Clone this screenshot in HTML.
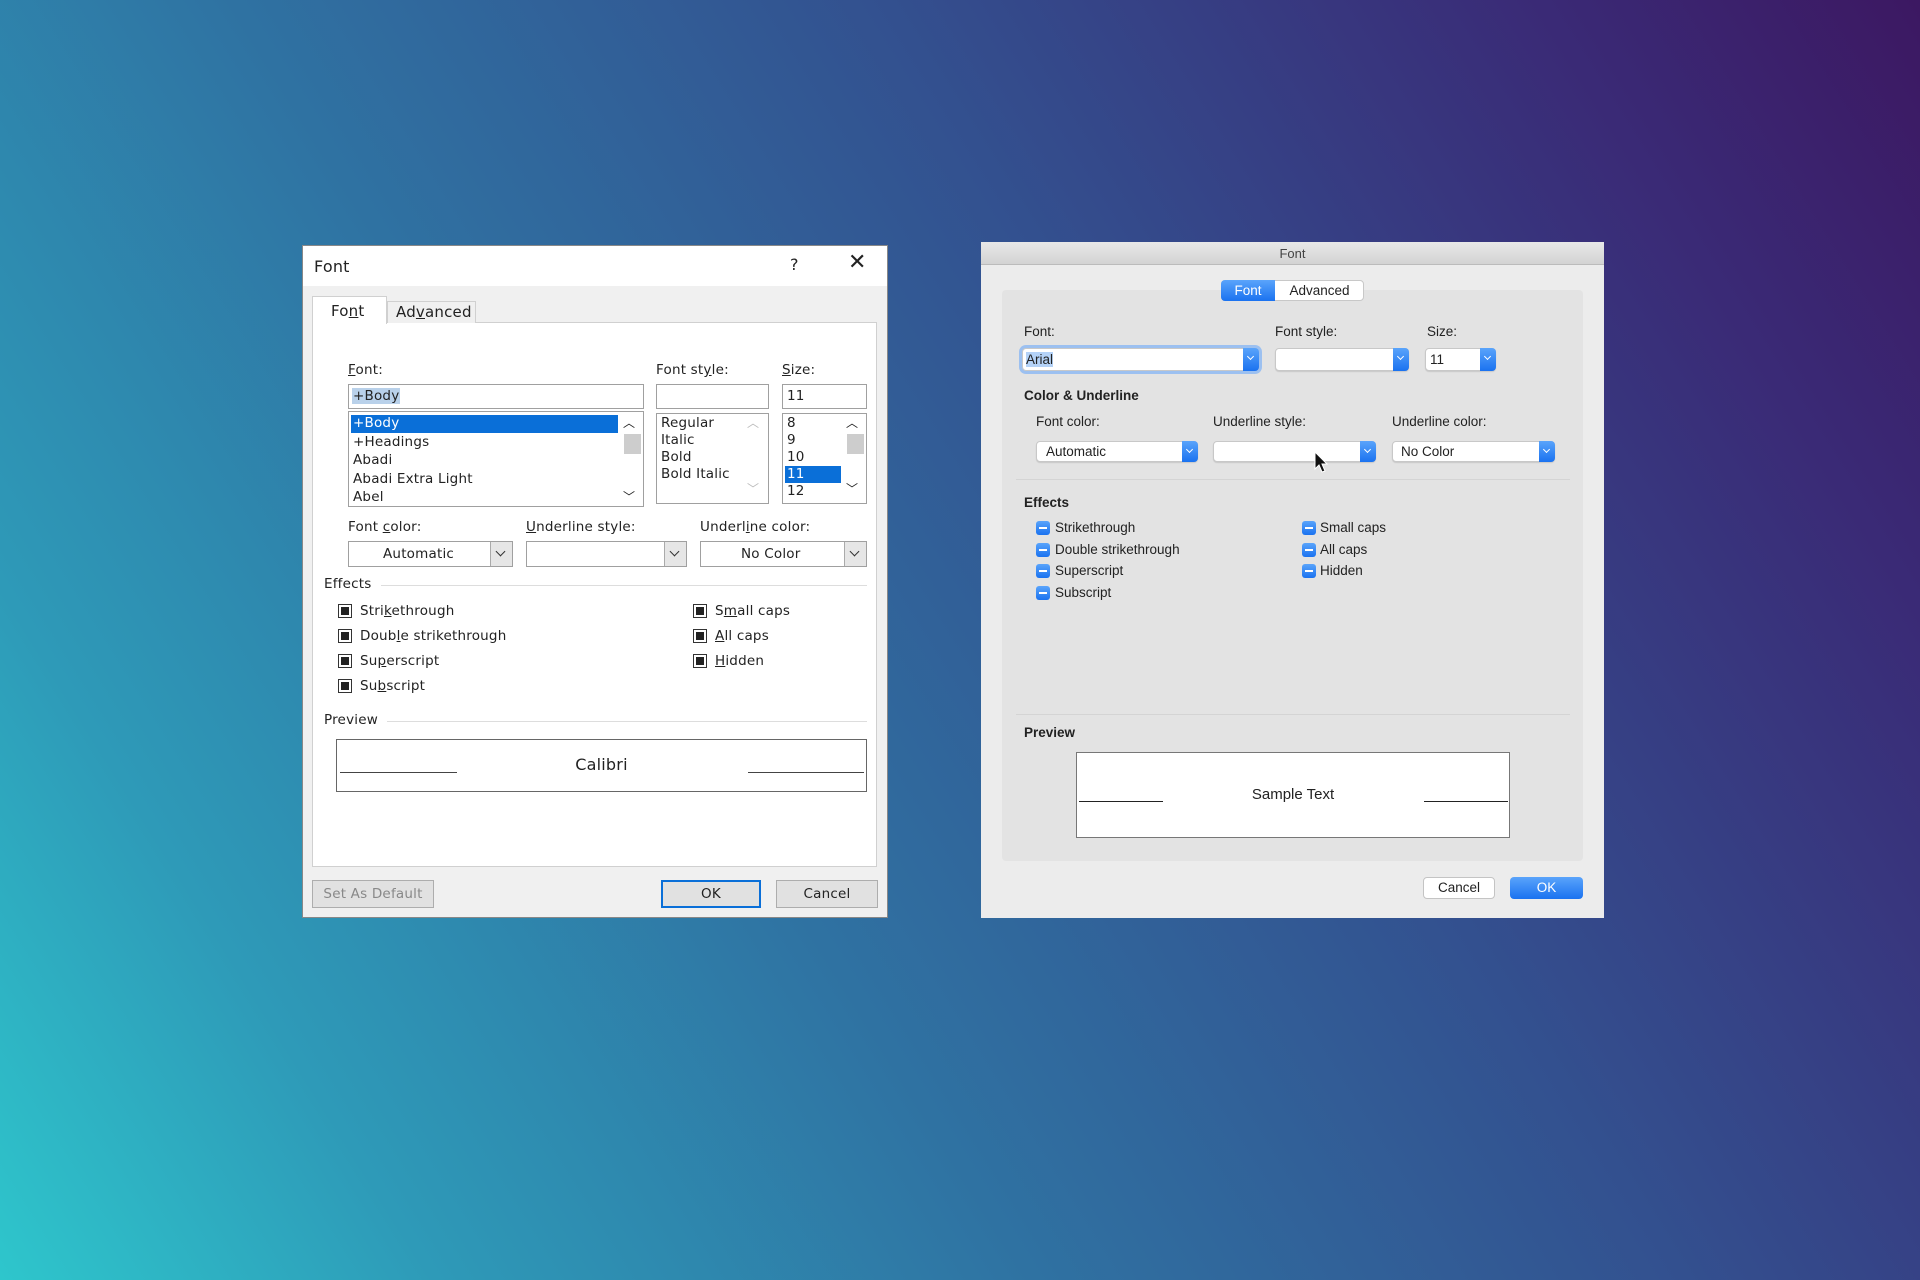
<!DOCTYPE html>
<html><head><meta charset="utf-8"><style>
*{margin:0;padding:0;box-sizing:border-box}
body{width:1920px;height:1280px;overflow:hidden;position:relative;font-family:"Liberation Sans",sans-serif;
background:linear-gradient(58deg,#2ec6cc 0%,#2e9ab8 16%,#2f72a2 38%,#33508f 62%,#3a2a76 86%,#3c1862 100%);}
.a{position:absolute}
.w{font-family:"DejaVu Sans","Liberation Sans",sans-serif;font-size:13.5px;letter-spacing:.2px;color:#222}
.box{position:absolute;background:#fff;border:1px solid #a0a0a0}
.dd{position:absolute;right:0;top:0;bottom:0;width:22px;background:#e6e6e6;border-left:1px solid #aaa}
.dd:after{content:"";position:absolute;left:6px;top:6px;width:6px;height:6px;border-right:1.5px solid #333;border-bottom:1.5px solid #333;transform:rotate(45deg)}
.cb{position:absolute;width:14px;height:14px;border:1px solid #333;background:#fff}
.cb:after{content:"";position:absolute;left:2px;top:2px;width:8px;height:8px;background:#222}
.m{font-size:13.5px;color:#222}
.mc{position:absolute;background:#fff;border:1px solid #c8c8c8;border-radius:4px;box-shadow:0 1px 1px rgba(0,0,0,.12)}
.mb{position:absolute;right:-1px;top:-1px;bottom:-1px;width:16px;background:linear-gradient(#5aa4fb,#1a72f0);border-radius:0 4px 4px 0}
.mb:after{content:"";position:absolute;left:5px;top:6px;width:4px;height:4px;border-right:1.5px solid #fff;border-bottom:1.5px solid #fff;transform:rotate(45deg)}
.mk{position:absolute;width:14px;height:14px;border-radius:3px;background:linear-gradient(#5aa4fb,#1a72f0)}
.mk:after{content:"";position:absolute;left:3px;top:6px;width:8px;height:2px;background:#fff}
</style></head><body>

<!-- Windows dialog -->
<div class="a w" style="left:302px;top:245px;width:586px;height:673px;background:#f0f0f0;border:1px solid #888">
  <div class="a" style="left:0;top:0;width:584px;height:40px;background:#fff"></div>
  <div class="a" style="left:11px;top:11px;font-size:16px">Font</div>
  <div class="a" style="left:487px;top:9px;font-size:16px">?</div>
  <div class="a" style="left:545px;top:4px;font-size:22px;font-weight:300">✕</div>
  <div class="a" style="left:9px;top:76px;width:565px;height:545px;background:#fff;border:1px solid #d0d0d0"></div>
  <div class="a" style="left:9px;top:50px;width:75px;height:28px;background:#fff;border:1px solid #d0d0d0;border-bottom:none"></div>
  <div class="a" style="left:28px;top:56px;font-size:15px">Fo<u>n</u>t</div>
  <div class="a" style="left:84px;top:55px;width:89px;height:22px;background:#f0f0f0;border:1px solid #d0d0d0;border-bottom:none"></div>
  <div class="a" style="left:93px;top:57px;font-size:15px">Ad<u>v</u>anced</div>

  <div class="a" style="left:45px;top:116px"><u>F</u>ont:</div>
  <div class="a" style="left:353px;top:116px">Font st<u>y</u>le:</div>
  <div class="a" style="left:479px;top:116px"><u>S</u>ize:</div>
  <div class="box" style="left:45px;top:138px;width:296px;height:25px"><span class="a" style="left:3px;top:3px;background:#b9d1ea;padding:0 1px">+Body</span></div>
  <div class="box" style="left:45px;top:165px;width:296px;height:96px">
    <div class="a" style="left:2px;top:3px;width:267px;height:18px;background:#0a6fd8"></div>
    <div class="a" style="left:4px;top:3px;color:#fff">+Body</div>
    <div class="a" style="left:4px;top:22px">+Headings</div>
    <div class="a" style="left:4px;top:40px">Abadi</div>
    <div class="a" style="left:4px;top:59px">Abadi Extra Light</div>
    <div class="a" style="left:4px;top:77px">Abel</div>
    <div class="a" style="left:274px;top:2px;font-size:12px">︿</div>
    <div class="a" style="left:275px;top:22px;width:17px;height:20px;background:#cdcdcd"></div>
    <div class="a" style="left:274px;top:76px;font-size:12px">﹀</div>
  </div>
  <div class="box" style="left:353px;top:138px;width:113px;height:25px"></div>
  <div class="box" style="left:353px;top:167px;width:113px;height:91px">
    <div class="a" style="left:4px;top:1px">Regular</div>
    <div class="a" style="left:4px;top:18px">Italic</div>
    <div class="a" style="left:4px;top:35px">Bold</div>
    <div class="a" style="left:4px;top:52px">Bold Italic</div>
    <div class="a" style="left:90px;top:0;font-size:12px;color:#bbb">︿</div>
    <div class="a" style="left:90px;top:66px;font-size:12px;color:#bbb">﹀</div>
  </div>
  <div class="box" style="left:479px;top:138px;width:85px;height:25px"><span class="a" style="left:4px;top:3px">11</span></div>
  <div class="box" style="left:479px;top:167px;width:85px;height:91px">
    <div class="a" style="left:4px;top:1px">8</div>
    <div class="a" style="left:4px;top:18px">9</div>
    <div class="a" style="left:4px;top:35px">10</div>
    <div class="a" style="left:2px;top:52px;width:56px;height:17px;background:#0a6fd8"></div>
    <div class="a" style="left:4px;top:52px;color:#fff">11</div>
    <div class="a" style="left:4px;top:69px">12</div>
    <div class="a" style="left:63px;top:0;font-size:12px">︿</div>
    <div class="a" style="left:64px;top:20px;width:17px;height:20px;background:#cdcdcd"></div>
    <div class="a" style="left:63px;top:66px;font-size:12px">﹀</div>
  </div>

  <div class="a" style="left:45px;top:273px">Font <u>c</u>olor:</div>
  <div class="a" style="left:223px;top:273px"><u>U</u>nderline style:</div>
  <div class="a" style="left:397px;top:273px">Underl<u>i</u>ne color:</div>
  <div class="box" style="left:45px;top:295px;width:165px;height:26px"><span class="a" style="left:34px;top:4px">Automatic</span><div class="dd"></div></div>
  <div class="box" style="left:223px;top:295px;width:161px;height:26px"><div class="dd"></div></div>
  <div class="box" style="left:397px;top:295px;width:167px;height:26px"><span class="a" style="left:40px;top:4px">No Color</span><div class="dd"></div></div>

  <div class="a" style="left:21px;top:330px">Effects</div>
  <div class="a" style="left:78px;top:339px;width:486px;height:1px;background:#ddd"></div>
  <div class="cb" style="left:35px;top:358px"></div><div class="a" style="left:57px;top:357px">Stri<u>k</u>ethrough</div>
  <div class="cb" style="left:35px;top:383px"></div><div class="a" style="left:57px;top:382px">Doub<u>l</u>e strikethrough</div>
  <div class="cb" style="left:35px;top:408px"></div><div class="a" style="left:57px;top:407px">Su<u>p</u>erscript</div>
  <div class="cb" style="left:35px;top:433px"></div><div class="a" style="left:57px;top:432px">Su<u>b</u>script</div>
  <div class="cb" style="left:390px;top:358px"></div><div class="a" style="left:412px;top:357px">S<u>m</u>all caps</div>
  <div class="cb" style="left:390px;top:383px"></div><div class="a" style="left:412px;top:382px"><u>A</u>ll caps</div>
  <div class="cb" style="left:390px;top:408px"></div><div class="a" style="left:412px;top:407px"><u>H</u>idden</div>

  <div class="a" style="left:21px;top:466px">Preview</div>
  <div class="a" style="left:84px;top:475px;width:480px;height:1px;background:#ddd"></div>
  <div class="a" style="left:33px;top:493px;width:531px;height:53px;background:#fff;border:1px solid #666">
    <div class="a" style="left:3px;top:32px;width:117px;height:1px;background:#444"></div>
    <div class="a" style="left:411px;top:32px;width:116px;height:1px;background:#444"></div>
    <div class="a" style="left:0;width:529px;top:15px;text-align:center;font-size:16px">Calibri</div>
  </div>

  <div class="a" style="left:9px;top:634px;width:122px;height:28px;border:1px solid #adadad;background:#e1e1e1;color:#888;text-align:center;line-height:26px">Set As Default</div>
  <div class="a" style="left:358px;top:634px;width:100px;height:28px;border:2px solid #0a6fd8;background:#e1e1e1;text-align:center;line-height:24px">OK</div>
  <div class="a" style="left:473px;top:634px;width:102px;height:28px;border:1px solid #adadad;background:#e1e1e1;text-align:center;line-height:26px">Cancel</div>
</div>

<!-- Mac dialog -->
<div class="a m" style="left:981px;top:242px;width:623px;height:676px;background:#ececec">
  <div class="a" style="left:0;top:0;width:623px;height:23px;background:linear-gradient(#e8e8e8,#d3d3d3);border-bottom:1px solid #bbb"></div>
  <div class="a" style="left:0;width:623px;top:4px;text-align:center;font-size:13px;color:#444">Font</div>
  <div class="a" style="left:21px;top:48px;width:581px;height:571px;background:#e3e3e3;border-radius:4px"></div>
  <div class="a" style="left:240px;top:38px;width:143px;height:21px;background:#fff;border:1px solid #c8c8c8;border-radius:4px"></div>
  <div class="a" style="left:240px;top:38px;width:54px;height:21px;background:linear-gradient(#5aa4fb,#1a72f0);border-radius:4px 0 0 4px;color:#fff;text-align:center;line-height:21px">Font</div>
  <div class="a" style="left:294px;top:38px;width:89px;text-align:center;line-height:21px">Advanced</div>

  <div class="a" style="left:43px;top:82px">Font:</div>
  <div class="a" style="left:294px;top:82px">Font style:</div>
  <div class="a" style="left:446px;top:82px">Size:</div>
  <div class="mc" style="left:41px;top:106px;width:237px;height:23px;box-shadow:0 0 0 3px #9cc0f0"><span class="a" style="left:3px;top:3px;background:#b4d2f7">Arial</span><div class="mb"></div></div>
  <div class="mc" style="left:294px;top:106px;width:134px;height:23px"><div class="mb"></div></div>
  <div class="mc" style="left:444px;top:106px;width:71px;height:23px"><span class="a" style="left:4px;top:3px">11</span><div class="mb"></div></div>

  <div class="a" style="left:43px;top:146px;font-weight:bold">Color &amp; Underline</div>
  <div class="a" style="left:55px;top:172px">Font color:</div>
  <div class="a" style="left:232px;top:172px">Underline style:</div>
  <div class="a" style="left:411px;top:172px">Underline color:</div>
  <div class="mc" style="left:55px;top:199px;width:162px;height:21px"><span class="a" style="left:9px;top:2px">Automatic</span><div class="mb"></div></div>
  <div class="mc" style="left:232px;top:199px;width:163px;height:21px"><div class="mb"></div></div>
  <div class="mc" style="left:411px;top:199px;width:163px;height:21px"><span class="a" style="left:8px;top:2px">No Color</span><div class="mb"></div></div>
  <svg class="a" style="left:333px;top:209px" width="16" height="24" viewBox="0 0 16 24"><path d="M1 1 L1 18 L5 14 L8 21 L11 20 L8 13 L13 13 Z" fill="#111" stroke="#fff" stroke-width="1"/></svg>
  <div class="a" style="left:35px;top:237px;width:554px;height:1px;background:#d4d4d4"></div>

  <div class="a" style="left:43px;top:253px;font-weight:bold">Effects</div>
  <div class="mk" style="left:55px;top:279px"></div><div class="a" style="left:74px;top:278px">Strikethrough</div>
  <div class="mk" style="left:55px;top:301px"></div><div class="a" style="left:74px;top:300px">Double strikethrough</div>
  <div class="mk" style="left:55px;top:322px"></div><div class="a" style="left:74px;top:321px">Superscript</div>
  <div class="mk" style="left:55px;top:344px"></div><div class="a" style="left:74px;top:343px">Subscript</div>
  <div class="mk" style="left:321px;top:279px"></div><div class="a" style="left:339px;top:278px">Small caps</div>
  <div class="mk" style="left:321px;top:301px"></div><div class="a" style="left:339px;top:300px">All caps</div>
  <div class="mk" style="left:321px;top:322px"></div><div class="a" style="left:339px;top:321px">Hidden</div>
  <div class="a" style="left:35px;top:472px;width:554px;height:1px;background:#d4d4d4"></div>

  <div class="a" style="left:43px;top:483px;font-weight:bold">Preview</div>
  <div class="a" style="left:95px;top:510px;width:434px;height:86px;background:#fff;border:1px solid #777">
    <div class="a" style="left:2px;top:48px;width:84px;height:1px;background:#222"></div>
    <div class="a" style="left:347px;top:48px;width:84px;height:1px;background:#222"></div>
    <div class="a" style="left:0;width:432px;top:33px;text-align:center;font-size:15px">Sample Text</div>
  </div>

  <div class="a" style="left:442px;top:635px;width:72px;height:22px;background:#fff;border:1px solid #c4c4c4;border-radius:4px;text-align:center;line-height:20px">Cancel</div>
  <div class="a" style="left:529px;top:635px;width:73px;height:22px;background:linear-gradient(#5aa4fb,#1a72f0);border-radius:4px;color:#fff;text-align:center;line-height:22px">OK</div>
</div>
</body></html>
